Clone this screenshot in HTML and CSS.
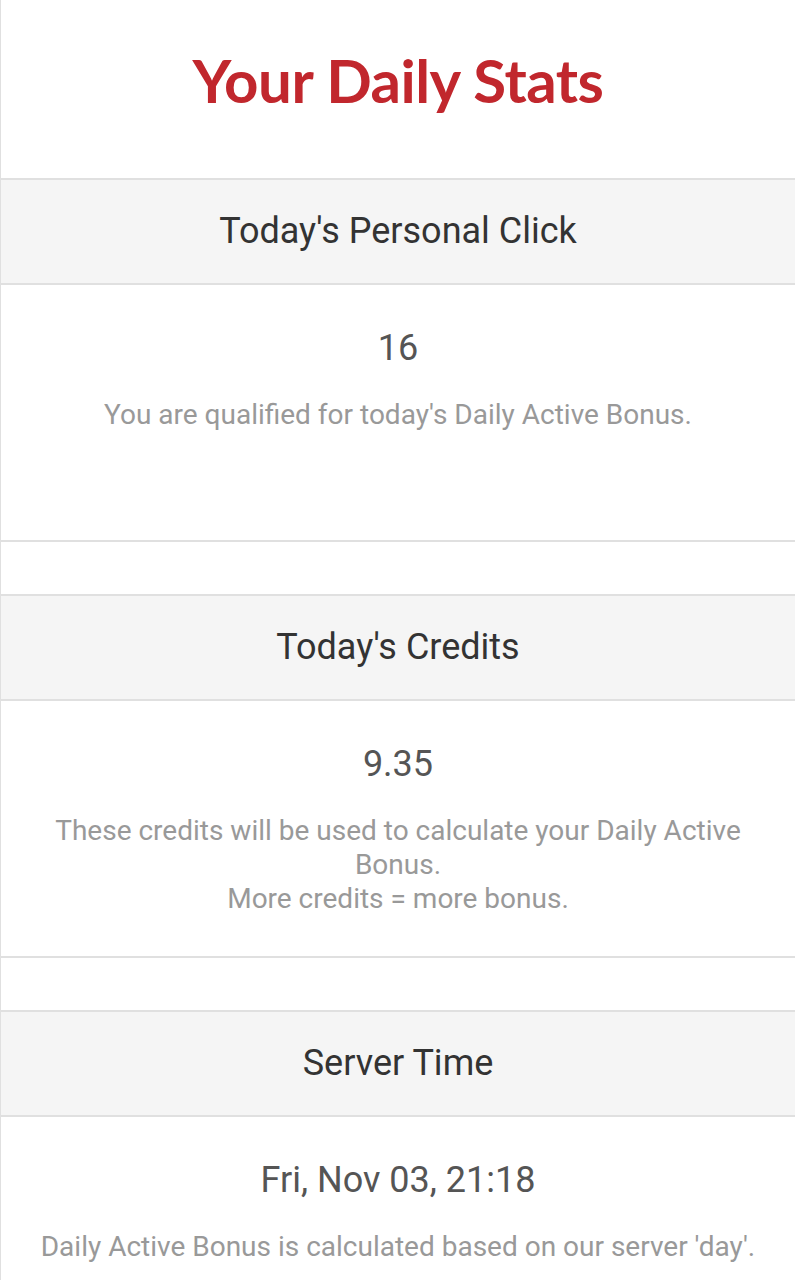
FILE: index.html
```html
<!DOCTYPE html>
<html lang="en">
<head>
    <meta charset="UTF-8">
    <meta name="viewport" content="width=device-width, initial-scale=1.0">
    <title>Your Daily Stats</title>
    <link rel="stylesheet" href="styles.css">
</head>
<body>
    <div class="page">
        <div class="page-title">
            <h1>Your Daily Stats</h1>
        </div>

        <div class="panel">
            <div class="panel-heading">Today's Personal Click</div>
            <div class="panel-body">
                <div class="stat-value">16</div>
                <p class="stat-note">You are qualified for today's Daily Active Bonus.</p>
            </div>
        </div>

        <div class="panel">
            <div class="panel-heading">Today's Credits</div>
            <div class="panel-body">
                <div class="stat-value">9.35</div>
                <p class="stat-note">These credits will be used to calculate your Daily Active Bonus.<br>More credits = more bonus.</p>
            </div>
        </div>

        <div class="panel">
            <div class="panel-heading">Server Time</div>
            <div class="panel-body">
                <div class="stat-value">Fri, Nov 03, 21:18</div>
                <p class="stat-note">Daily Active Bonus is calculated based on our server 'day'.</p>
            </div>
        </div>
    </div>
</body>
</html>
```

FILE: styles.css
```css
body {
    margin: 0;
    background-color: #fff;
    font-family: Roboto, "Liberation Sans", Arial, sans-serif;
    text-align: center;
}
.page {
    border-left: 1px solid #e0e0e0;
    min-height: 1280px;
}
.page-title {
    height: 178px;
    display: flex;
    align-items: center;
    justify-content: center;
}
.page-title h1 {
    margin: 0 0 18px 0;
    font-family: Lato, "Open Sans", sans-serif;
    font-weight: 700;
    font-size: 60px;
    color: #c1272d;
    letter-spacing: -0.5px;
}
.panel {
    border-top: 2px solid #e0e0e0;
    border-bottom: 2px solid #e0e0e0;
    margin-bottom: 52px;
}
.panel-heading {
    height: 103px;
    line-height: 103px;
    background-color: #f5f5f5;
    border-bottom: 2px solid #e0e0e0;
    font-size: 36px;
    color: #333;
}
.panel-body {
    min-height: 215px;
    padding: 40px 20px 0 20px;
    box-sizing: content-box;
}
.stat-value {
    font-size: 36px;
    line-height: 46px;
    color: #555;
    margin-bottom: 27px;
}
.stat-note {
    margin: 0;
    font-size: 28px;
    line-height: 34px;
    color: #999;
}
```
